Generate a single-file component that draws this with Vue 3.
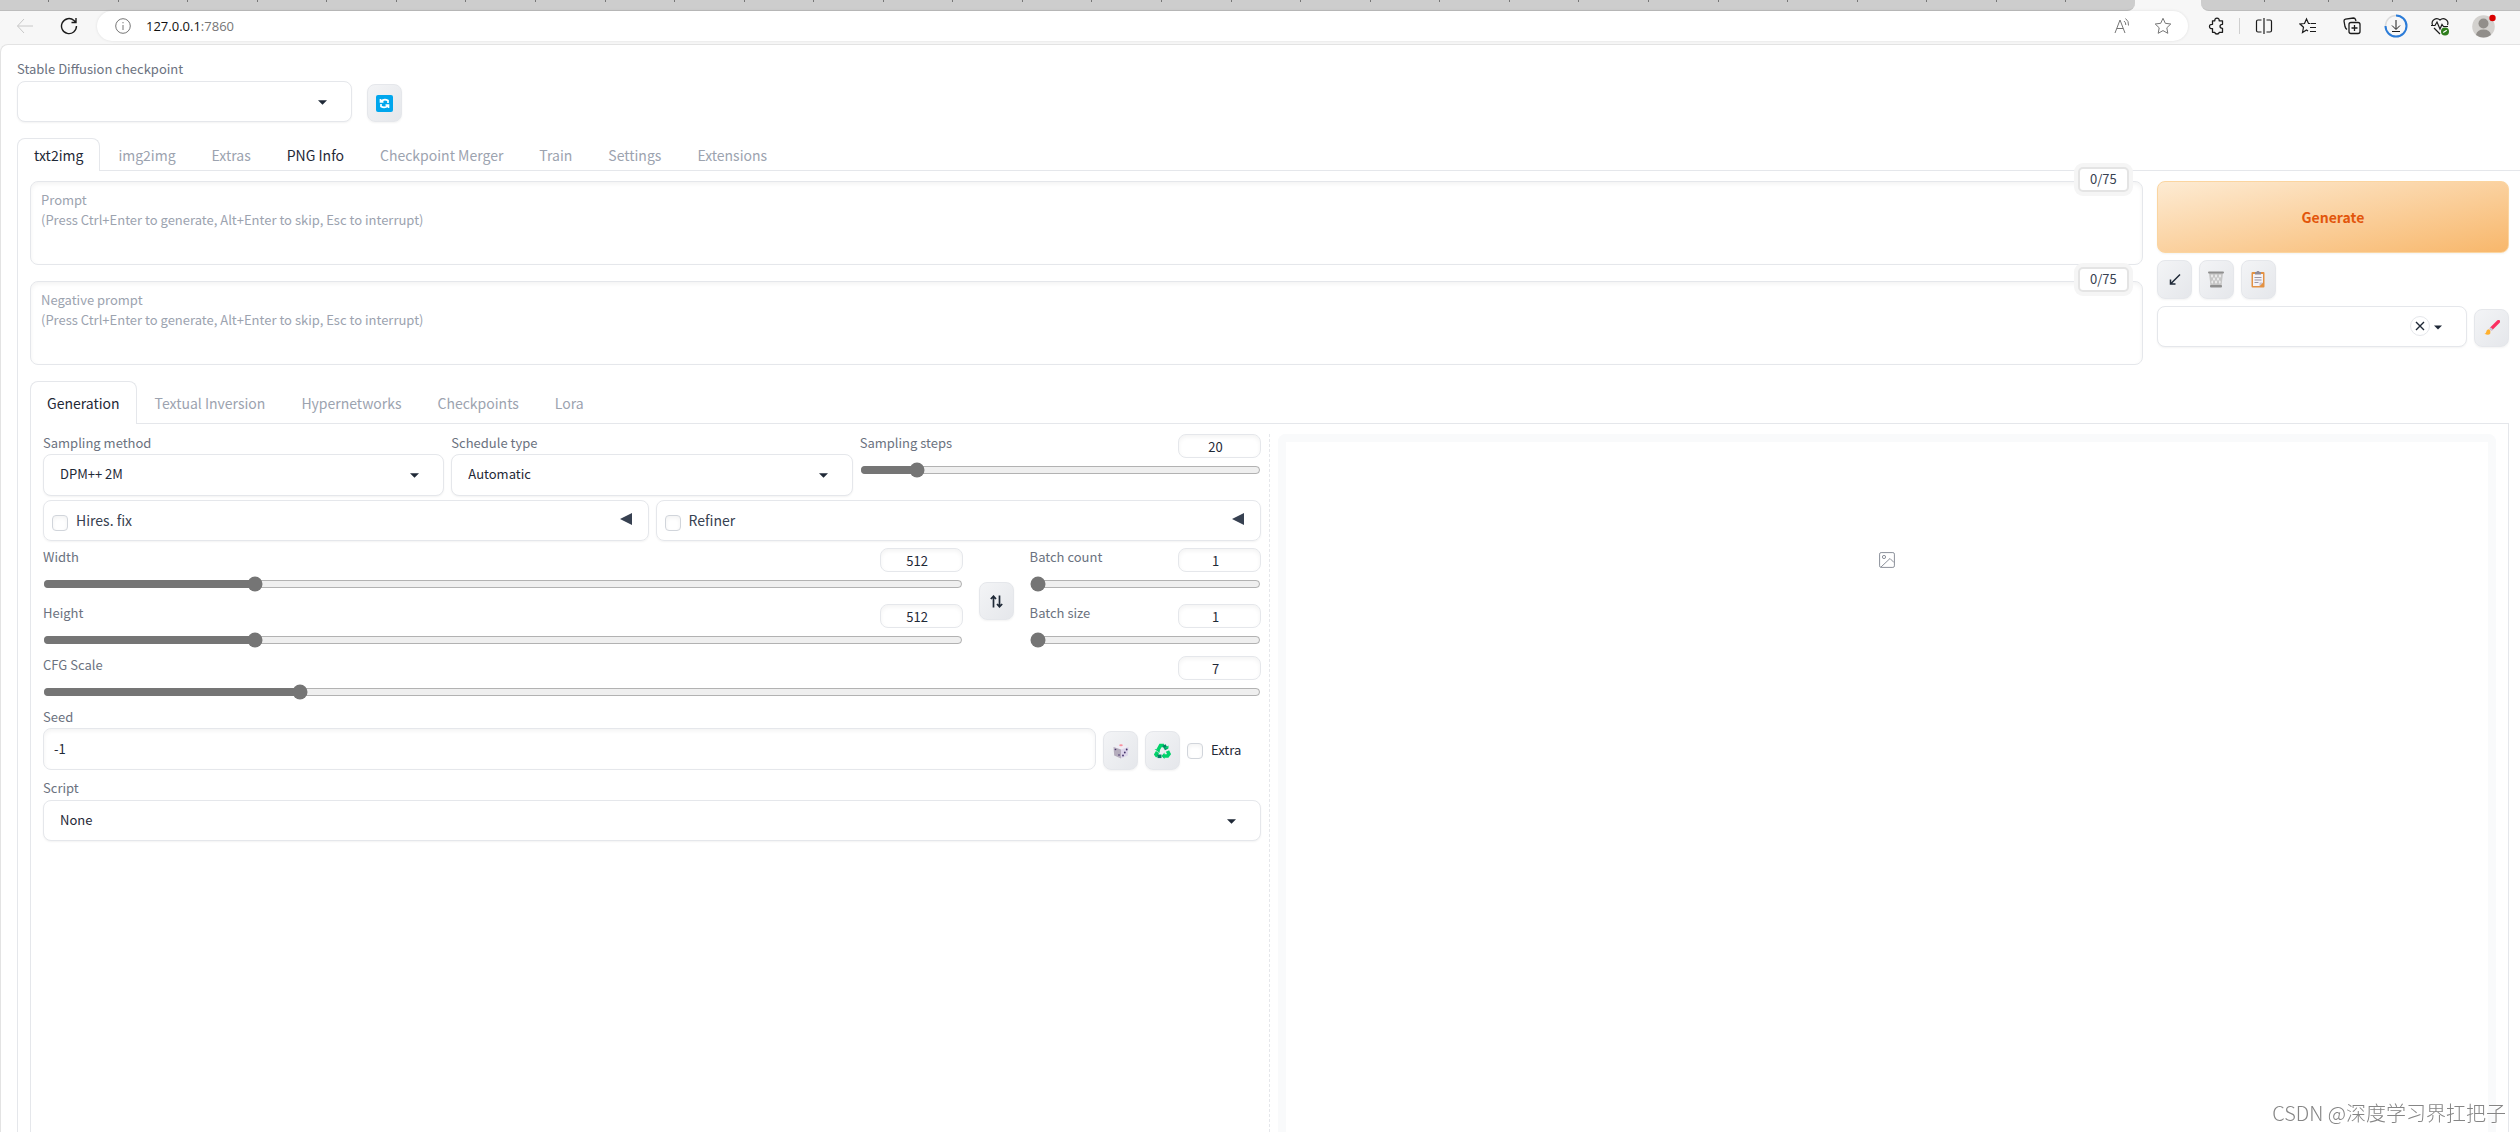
<script setup>
import { ref } from 'vue'

const tabs = ['txt2img', 'img2img', 'Extras', 'PNG Info', 'Checkpoint Merger', 'Train', 'Settings', 'Extensions']
const activeTab = ref('txt2img')
const subTabs = ['Generation', 'Textual Inversion', 'Hypernetworks', 'Checkpoints', 'Lora']
const activeSub = ref('Generation')

const hint = '(Press Ctrl+Enter to generate, Alt+Enter to skip, Esc to interrupt)'
const prompts = ref([
  { id: 'prompt', name: 'Prompt', text: '' },
  { id: 'negative', name: 'Negative prompt', text: '' },
])

const steps = ref(20)
const width = ref(512)
const height = ref(512)
const batchCount = ref(1)
const batchSize = ref(1)
const cfg = ref(7)
const seed = ref('-1')
const sampler = ref('DPM++ 2M')
const schedule = ref('Automatic')
const script = ref('None')

function swapSize() {
  const w = width.value
  width.value = height.value
  height.value = w
}
</script>

<template>
  <div class="browser">
    <div class="strip">
      <div class="strip-group wide"><i class="first"></i><i v-for="n in 30" :key="n"></i></div>
      <div class="strip-active"></div>
      <div class="strip-group rest"><i v-for="n in 5" :key="n"></i></div>
    </div>

    <header class="toolbar">
      <button class="tb back" aria-label="Back">
        <svg width="18" height="18" viewBox="0 0 18 18"><path d="M17 9H1.500M8 2L1.500 9L8 16" /></svg>
      </button>
      <button class="tb" aria-label="Reload">
        <svg width="18" height="18" viewBox="0 0 18 18"><path d="M16.500 9A7.500 7.500 0 1 1 14 3.500L16 5.500M16 1V5.500H11.500" stroke-width="1.400" /></svg>
      </button>
      <div class="address">
        <svg class="info" width="16" height="16" viewBox="0 0 16 16"><circle cx="8" cy="8" r="7.300" /><path d="M8 7V12M8 4V5.300" /></svg>
        <span class="url">127.0.0.1<em>:7860</em></span>
        <button class="pill-btn" aria-label="Read aloud">
          <svg width="18" height="18" viewBox="0 0 18 18"><path d="M1 16L6 3L11 16M2.800 11.500H9.200M10 4Q12 5.500 11.800 8M11.500 1.500Q15 4 14.500 8.500" /></svg>
        </button>
        <button class="pill-btn" aria-label="Add to favorites">
          <svg width="18" height="18" viewBox="0 0 18 18"><path d="M9 1.300L11.300 6.300L16.800 7L12.800 10.800L13.800 16.300L9 13.600L4.200 16.300L5.200 10.800L1.200 7L6.700 6.300Z" stroke-linejoin="round" /></svg>
        </button>
      </div>
      <button class="tb ext" aria-label="Extensions">
        <svg width="18" height="18" viewBox="0 0 18 18"><path d="M4.500 3.800H6.800Q6.600 1.200 9 1.200T11.200 3.800H14.500V7.300Q12 7.300 12 9.300T14.500 11.300V15.300H11.200Q11 17 9 17T6.800 15.300H4.500V11.600Q1.500 11.800 1.500 9.500T4.500 7.300Z" stroke-width="1.300" stroke-linejoin="round" /></svg>
      </button>
      <span class="divider"></span>
      <button class="tb" aria-label="Split screen">
        <svg width="18" height="18" viewBox="0 0 18 18"><path d="M6.500 3H3Q1.500 3 1.500 4.500V13.500Q1.500 15 3 15H6.500M9 1V17M11.500 3H15Q16.500 3 16.500 4.500V13.500Q16.500 15 15 15H11.500" stroke-width="1.200" /></svg>
      </button>
      <button class="tb" aria-label="Favorites">
        <svg width="18" height="18" viewBox="0 0 18 18"><path d="M11.500 6.500H9.500L7.500 2L5.500 6.500L1 7L4.500 10.300L3.500 15.500L7.500 13L9 14M12 6.500H17M11 10.500H17M11 14.500H17" stroke-width="1.200" /></svg>
      </button>
      <button class="tb" aria-label="Collections">
        <svg width="18" height="18" viewBox="0 0 18 18"><path d="M4 12.500Q2.500 11.500 2 9.500L1 4Q1 2.500 2.500 2.200L10.500 1Q12 1 12.500 2.500L13 4M8 5.500H15Q17 5.500 17 7.500V14.500Q17 16.500 15 16.500H8Q6 16.500 6 14.500V7.500Q6 5.500 8 5.500ZM11.500 8V14M8.500 11H14.500" stroke-width="1.300" /></svg>
      </button>
      <button class="tb" aria-label="Downloads">
        <svg width="24" height="24" viewBox="0 0 24 24"><circle cx="12" cy="12" r="10.500" stroke="#dcdcdc" stroke-width="1.500" /><path d="M12 1.500A10.500 10.500 0 1 1 1.500 12" stroke="#2b7cd9" stroke-width="2" /><path d="M12 6V15M8 11.500L12 15.500L16 11.500M8 17.500H16" /></svg>
      </button>
      <button class="tb" aria-label="Browser essentials">
        <svg width="20" height="20" viewBox="0 0 20 20"><path d="M2.500 9A4.600 4.600 0 0 1 10 4A4.600 4.600 0 0 1 17.500 9M1 9.500H5L7 6L10 13L12 8.500L13.500 10.500H18M4 12L10 18" stroke-width="1.200" /><circle cx="15" cy="15.500" r="4" fill="#2e7d1c" stroke="none" /><path d="M13.200 16.500L16.800 14.300" stroke="#fff" stroke-width="1.200" /></svg>
      </button>
      <button class="tb" aria-label="Profile">
        <svg width="24" height="24" viewBox="0 0 24 24"><g stroke="none"><circle cx="11.500" cy="12.500" r="11.300" fill="#d3d1ce" /><circle cx="11.500" cy="9.500" r="5" fill="#918e8a" /><path d="M4 21Q5 15.500 11.500 15.500T19 21Q11.500 26 4 21Z" fill="#918e8a" /><circle cx="20.500" cy="4" r="3.200" fill="#d90000" /></g></svg>
      </button>
    </header>

    <main class="page">
      <div class="checkpoint">
        <div class="field">
          <label for="ckpt">Stable Diffusion checkpoint</label>
          <div class="select"><select id="ckpt"><option></option></select><svg class="caret" width="9" height="5" viewBox="0 0 10 5"><path d="M0 0H10L5 5Z" /></svg></div>
        </div>
        <button class="tool short" aria-label="Refresh">
          <svg width="17" height="17" viewBox="0 0 17 17"><rect width="17" height="17" rx="2" fill="#00a6ed" /><path d="M4.500 4V7H7.500M5 6.500Q8 3.300 12 5.500V8M12.500 13V10H9.500M12 10.500Q9 13.700 5 11.500V9" fill="none" stroke="#fff" stroke-width="1.700" /></svg>
        </button>
      </div>

      <nav class="tabs">
        <button v-for="t in tabs" :key="t" :class="{ active: t === activeTab, dark: t === 'PNG Info' }" @click="activeTab = t">{{ t }}</button>
      </nav>

      <section class="panel">
        <div class="top">
          <div class="prompts">
            <div v-for="p in prompts" :key="p.id" class="prompt">
              <textarea v-model="p.text" :aria-label="p.name" :placeholder="p.name + '\n' + hint"></textarea>
              <span class="counter">0/75</span>
            </div>
          </div>
          <div class="actions">
            <button class="generate">Generate</button>
            <div class="tools">
              <button class="tool" aria-label="Read parameters">
                <svg width="13" height="13" viewBox="0 0 13 13"><path d="M12 1.500L3 10.500M2.500 6.500V11H7.500" fill="none" stroke="#1f2937" stroke-width="1.500" /></svg>
              </button>
              <button class="tool" aria-label="Clear prompt">
                <svg width="16" height="17" viewBox="0 0 16 17"><path d="M1 2H15L13.500 15H2.500Z" fill="#c6c6c6" /><g fill="#ededed"><path d="M4 3L5.200 5L4 7L2.800 5ZM8 3L9.200 5L8 7L6.800 5ZM12 3L13.200 5L12 7L10.800 5ZM6 6L7.200 8L6 10L4.800 8ZM10 6L11.200 8L10 10L8.800 8ZM4.200 9L5.200 11L4.200 13L3.200 11ZM8 9L9.200 11L8 13L6.800 11ZM11.800 9L12.800 11L11.800 13L10.800 11Z" /></g><rect y=".5" width="16" height="2" rx="1" fill="#8f8f8f" /><rect x="2" y="14" width="12" height="2.500" rx="1" fill="#8f8f8f" /></svg>
              </button>
              <button class="tool" aria-label="Apply styles">
                <svg width="14" height="17" viewBox="0 0 14 17"><rect x=".5" y="1" width="13" height="15.500" rx="1" fill="#e39142" /><path d="M2 3H12V11.500L8.500 15H2Z" fill="#f4f2f7" /><path d="M12 11.500L8.500 15V11.500Z" fill="#c7c2cf" /><rect x="4" y="1" width="6" height="2.500" fill="#8f8b98" /><rect x="5.500" width="3" height="2" rx="1" fill="#8f8b98" /><path d="M3.500 6.500H10.500M3.500 9H10.500M3.500 11.500H7.500" stroke="#9a96a3" /></svg>
              </button>
            </div>
            <div class="styles">
              <div class="select">
                <select aria-label="Styles"><option></option></select>
                <button class="clear" aria-label="Clear styles"><svg width="10" height="10" viewBox="0 0 10 10"><path d="M1 1L9 9M9 1L1 9" fill="none" stroke="#1f2937" stroke-width="1.400" /></svg></button>
                <svg class="caret" width="8" height="5" viewBox="0 0 10 5"><path d="M0 0H10L5 5Z" /></svg>
              </div>
              <button class="tool short" aria-label="Edit styles">
                <svg width="16" height="16" viewBox="0 0 16 16"><path d="M14.500 1.500L7.500 8.500" stroke="#fb2f62" stroke-width="3.200" stroke-linecap="round" /><path d="M6 8L8.300 10.300" stroke="#cfc9d8" stroke-width="2" /><path d="M5.200 9.300Q2.500 9 2.200 12Q2 13.500 0.500 13.700Q4.500 15.800 6.300 13.500Q7.500 11.500 5.200 9.300Z" fill="#ffb02e" /></svg>
              </button>
            </div>
          </div>
        </div>

        <nav class="tabs sub">
          <button v-for="t in subTabs" :key="t" :class="{ active: t === activeSub }" @click="activeSub = t">{{ t }}</button>
        </nav>

        <section class="panel inner">
          <div class="settings">
            <div class="row three">
              <div class="field">
                <label for="sampler">Sampling method</label>
                <div class="select"><select id="sampler" v-model="sampler"><option>DPM++ 2M</option></select><svg class="caret" width="9" height="5" viewBox="0 0 10 5"><path d="M0 0H10L5 5Z" /></svg></div>
              </div>
              <div class="field">
                <label for="schedule">Schedule type</label>
                <div class="select"><select id="schedule" v-model="schedule"><option>Automatic</option></select><svg class="caret" width="9" height="5" viewBox="0 0 10 5"><path d="M0 0H10L5 5Z" /></svg></div>
              </div>
              <div class="slider">
                <div class="head"><label for="steps">Sampling steps</label><input v-model="steps" type="number" aria-label="Sampling steps value"></div>
                <input id="steps" v-model="steps" type="range" min="1" max="150">
              </div>
            </div>

            <div class="row accordions">
              <div class="accordion">
                <input id="hires" type="checkbox"><label for="hires">Hires. fix</label>
                <svg width="12" height="12" viewBox="0 0 12 12"><path d="M12 0V12L0 6Z" /></svg>
              </div>
              <div class="accordion">
                <input id="refiner" type="checkbox"><label for="refiner">Refiner</label>
                <svg width="12" height="12" viewBox="0 0 12 12"><path d="M12 0V12L0 6Z" /></svg>
              </div>
            </div>

            <div class="row size">
              <div class="stack">
                <div class="slider">
                  <div class="head"><label for="width">Width</label><input v-model="width" type="number" aria-label="Width value"></div>
                  <input id="width" v-model="width" type="range" min="64" max="2048" step="8">
                </div>
                <div class="slider">
                  <div class="head"><label for="height">Height</label><input v-model="height" type="number" aria-label="Height value"></div>
                  <input id="height" v-model="height" type="range" min="64" max="2048" step="8">
                </div>
              </div>
              <div class="swap">
                <button class="tool short" aria-label="Swap width and height" @click="swapSize">
                  <svg width="13" height="13" viewBox="0 0 13 13"><path d="M3.500 12.500V1.500M0.800 4L3.500 1.200L6 4M9.500 0.500V11.500M7 9L9.500 11.800L12.200 9" fill="none" stroke="#1f2937" stroke-width="1.700" /></svg>
                </button>
              </div>
              <div class="stack batch">
                <div class="slider">
                  <div class="head"><label for="count">Batch count</label><input v-model="batchCount" type="number" aria-label="Batch count value"></div>
                  <input id="count" v-model="batchCount" type="range" min="1" max="100">
                </div>
                <div class="slider">
                  <div class="head"><label for="bsize">Batch size</label><input v-model="batchSize" type="number" aria-label="Batch size value"></div>
                  <input id="bsize" v-model="batchSize" type="range" min="1" max="8">
                </div>
              </div>
            </div>

            <div class="slider cfg">
              <div class="head"><label for="cfg">CFG Scale</label><input v-model="cfg" type="number" aria-label="CFG Scale value"></div>
              <input id="cfg" v-model="cfg" type="range" min="1" max="30" step="0.5">
            </div>

            <div class="row seed">
              <div class="field">
                <label for="seed">Seed</label>
                <input id="seed" v-model="seed" class="text" type="text">
              </div>
              <button class="tool" aria-label="Random seed">
                <svg width="16" height="16" viewBox="0 0 16 16"><path d="M0.500 4L8 1.500L15.500 4L8 6.500Z" fill="#f1edf5" /><path d="M0.500 4L8 6.500V15.500L1.200 12.500Z" fill="#b4acbc" /><path d="M15.500 4L8 6.500V15.500L14.800 12.500Z" fill="#ddd6ea" /><ellipse cx="8" cy="2.200" rx="1.800" ry="1" fill="#f8929f" /><g fill="#43316b"><circle cx="2.500" cy="6.500" r=".8" /><circle cx="6" cy="12" r=".8" /><circle cx="10" cy="12.500" r=".9" /><circle cx="11.800" cy="9.500" r=".9" /><circle cx="13.700" cy="6.500" r=".9" /></g></svg>
              </button>
              <button class="tool" aria-label="Reuse seed">
                <svg width="17" height="16" viewBox="0 0 17 16"><g fill="none" stroke-width="3.600"><path d="M4 7L6.500 2.500H10" stroke="#00d26a" /><path d="M10 2L12.500 6.500" stroke="#008463" /><path d="M13.500 8L15 11L13.500 13H9.500" stroke="#00d26a" /><path d="M3.500 9L2 11.500L3.500 13.500" stroke="#00d26a" /><path d="M3.500 13.300H7.500" stroke="#008463" /></g><path d="M9.500 5.500H14.500V2.500ZM10.500 9.500V16L7.500 13ZM0.500 6L6 6.500L5.500 10Z" fill="#00d26a" /></svg>
              </button>
              <div class="extra"><input id="extra" type="checkbox"><label for="extra">Extra</label></div>
            </div>

            <div class="field script">
              <label for="script">Script</label>
              <div class="select"><select id="script" v-model="script"><option>None</option></select><svg class="caret" width="9" height="5" viewBox="0 0 10 5"><path d="M0 0H10L5 5Z" /></svg></div>
            </div>
          </div>

          <div class="handle"></div>

          <div class="gallery">
            <svg width="16" height="16" viewBox="0 0 16 16"><rect x=".6" y=".6" width="14.800" height="14.800" rx="1.500" /><circle cx="5" cy="5" r="1.600" /><path d="M2 15L11 6.500L15 10.500" /></svg>
          </div>
        </section>
      </section>
    </main>

    <div class="watermark">CSDN @深度学习界扛把子</div>
  </div>
</template>

<style>
body {
  background: #fff;
  overflow: hidden;
}
</style>

<style scoped>
.browser,
.browser * {
  box-sizing: border-box;
}
.browser {
  display: flex;
  flex-direction: column;
  min-height: 100vh;
  background: #f7f7f7;
  color: #1f2937;
  font-family: "Noto Sans CJK SC", "Noto Sans", sans-serif;
  font-size: 13px;
  line-height: 20px;
}
button,
input,
select,
textarea {
  margin: 0;
  font: inherit;
  color: inherit;
}
button {
  padding: 0;
  border: 0;
  background: none;
}

/* browser chrome */
.strip {
  display: flex;
  height: 11px;
}
.strip-group {
  display: flex;
  background: #cdcdcd;
  border-bottom: 1px solid #bdbdbd;
}
.strip-group i {
  flex: 1;
  height: 2px;
  border-right: 1px solid #777;
}
.strip-group i.first {
  flex: 0 0 49px;
}
.strip-group i:last-child {
  border: 0;
}
.wide {
  flex: 1;
  border-radius: 0 0 8px 0;
}
.strip-active {
  width: 66px;
}
.rest {
  width: 319px;
  border-radius: 0 0 0 8px;
}
.toolbar {
  display: flex;
  align-items: center;
  height: 33px;
  padding: 0 14px 3px 3px;
}
.toolbar svg {
  fill: none;
  stroke: #1b1b1b;
}
.tb {
  display: flex;
  flex: 0 0 44px;
  align-items: center;
  justify-content: center;
}
.tb.back svg {
  stroke: #c8c8c8;
}
.tb.ext {
  margin-left: 7px;
}
.divider {
  width: 1px;
  height: 16px;
  margin-right: 2px;
  background: #cfcfcf;
}
.address {
  display: flex;
  flex: 1;
  align-items: center;
  height: 30px;
  margin-left: 6px;
  padding: 0 16px 0 18px;
  border-radius: 15px;
  background: #fff;
  box-shadow: 0 0 3px rgba(0, 0, 0, 0.1);
}
.toolbar .address svg {
  display: block;
  stroke: #767676;
}
.url {
  flex: 1;
  margin-left: 15px;
  color: #111;
  font-family: "Open Sans", sans-serif;
  font-size: 13px;
}
.url em {
  color: #767676;
  font-style: normal;
}
.pill-btn {
  margin-left: 22px;
}

/* page */
.page {
  display: flex;
  flex: 1;
  flex-direction: column;
  padding: 15px 0 0 16px;
  border: 1px solid #e3e3e3;
  border-width: 1px 0 0 1px;
  border-radius: 8px 0 0 0;
  background: #fff;
}
.field {
  display: flex;
  flex: 1;
  flex-direction: column;
  min-width: 0;
}
label {
  color: #6b7280;
}
.field > label {
  padding-bottom: 2px;
  line-height: 18px;
}
.select {
  position: relative;
  flex: 1;
}
.select select {
  display: block;
  width: 100%;
  height: 41px;
  padding: 0 40px 2px 16px;
  border: 1px solid #e5e7eb;
  border-radius: 8px;
  background: #fff;
  box-shadow: 0 1px 2px rgba(0, 0, 0, 0.05);
  appearance: none;
}
.caret {
  position: absolute;
  top: 19px;
  right: 25px;
  fill: #1f2937;
  pointer-events: none;
}
.tool {
  display: flex;
  flex: 0 0 35px;
  align-items: center;
  justify-content: center;
  height: 39px;
  border: 1px solid #e5e7eb;
  border-radius: 8px;
  background: linear-gradient(to bottom right, #f3f4f6, #e5e7eb);
  box-shadow: 0 1px 2px rgba(0, 0, 0, 0.05);
}
.tool.short {
  height: 38px;
}
.checkpoint {
  display: flex;
  align-items: flex-end;
  gap: 15px;
}
.checkpoint .field {
  flex: 0 0 335px;
}
.checkpoint .field > label,
.script > label {
  padding-bottom: 3px;
}

.tabs {
  display: flex;
  height: 32px;
  margin-top: 16px;
}
.tabs button {
  height: 33px;
  padding: 0 17px;
  border: 1px solid transparent;
  border-bottom: 0;
  border-radius: 8px 8px 0 0;
  color: #9ca3af;
  font-size: 14px;
}
.tabs button.dark {
  color: #1f2937;
}
.tabs button.active {
  z-index: 1;
  padding: 0 16px;
  border-color: #e5e7eb;
  background: #fff;
  color: #1f2937;
}
.tabs.sub {
  height: 42px;
}
.tabs.sub button {
  height: 43px;
}
.panel {
  display: flex;
  flex: 1;
  flex-direction: column;
  padding: 10px 11px 0 12px;
  border: 1px solid #e5e7eb;
  border-width: 1px 0 0 1px;
}
.panel.inner {
  display: grid;
  grid-template-columns: minmax(0, 1fr) 1px minmax(0, 1fr);
  gap: 8px;
  padding: 10px 12px 0;
  border-width: 1px 1px 0;
}

.top {
  display: flex;
  gap: 14px;
}
.prompts {
  display: flex;
  flex: 6;
  flex-direction: column;
  gap: 16px;
}
.prompt {
  position: relative;
}
textarea,
.text,
.head input {
  border: 1px solid #e5e7eb;
  border-radius: 8px;
  background: #fff;
  box-shadow: inset 0 2px 4px rgba(0, 0, 0, 0.05);
}
textarea {
  display: block;
  width: 100%;
  height: 84px;
  padding: 8px 10px;
  resize: none;
}
textarea::placeholder {
  color: #9ca3af;
  opacity: 1;
}
.counter {
  position: absolute;
  top: -14px;
  right: 14px;
  width: 51px;
  padding-bottom: 1px;
  border: 2px solid #e4e4e4;
  border-radius: 5px;
  background: #fff;
  box-shadow: 0 0 0 4px #f5f5f5;
  color: #374151;
  line-height: 20px;
  text-align: center;
}
.actions {
  display: flex;
  flex: 1;
  flex-direction: column;
  gap: 7px;
}
.generate {
  height: 72px;
  border: 1px solid #fbd5a0;
  border-radius: 8px;
  background: linear-gradient(to bottom right, #fdebd3, #f8b76b);
  box-shadow: 0 1px 2px rgba(0, 0, 0, 0.05);
  color: #e2560c;
  font-size: 14px;
  font-weight: 700;
}
.tools,
.styles {
  display: flex;
  align-items: flex-end;
  gap: 7px;
}
.clear {
  position: absolute;
  top: 10px;
  right: 37px;
  display: flex;
  align-items: center;
  justify-content: center;
  width: 20px;
  height: 20px;
  border: 1px solid #e5e7eb;
  border-radius: 50%;
  background: #fff;
}

.settings {
  display: flex;
  flex-direction: column;
}
.row {
  display: flex;
  gap: 7px;
}
.three .slider,
.three .field {
  flex: 1 1 0;
}
.three .select select {
  height: 42px;
}
.head {
  display: flex;
  align-items: flex-start;
  justify-content: space-between;
  height: 24px;
}
.head label {
  line-height: 18px;
}
.head input {
  width: 83px;
  height: 24px;
  padding: 0 8px 0 0;
  text-align: center;
  appearance: textfield;
}
.head input::-webkit-inner-spin-button {
  display: none;
}
input[type="range"] {
  display: block;
  width: 100%;
  height: 16px;
  margin: 4px 0 0;
  accent-color: #757575;
}
.accordions {
  margin-top: 4px;
}
.accordion {
  display: flex;
  flex: 1;
  align-items: center;
  height: 41px;
  padding: 0 16px 0 8px;
  border: 1px solid #e5e7eb;
  border-radius: 8px;
  box-shadow: 0 1px 2px rgba(0, 0, 0, 0.05);
}
.accordion label {
  flex: 1;
  margin-left: 8px;
  padding-bottom: 2px;
  color: #374151;
  font-size: 14px;
}
.accordion svg {
  margin-bottom: 3px;
  fill: #374151;
}
input[type="checkbox"] {
  width: 16px;
  height: 16px;
  border: 1px solid #d1d5db;
  border-radius: 4px;
  background: #fff;
  box-shadow: inset 0 2px 4px rgba(0, 0, 0, 0.05);
  appearance: none;
}
.accordion input[type="checkbox"] {
  margin-top: 4px;
}
.size {
  margin-top: 7px;
  gap: 16px;
}
.stack {
  display: flex;
  flex: 1;
  flex-direction: column;
  gap: 12px;
}
.stack.batch {
  flex: 0 0 19%;
}
.swap {
  display: flex;
  flex: 0 0 35px;
  align-items: center;
  padding-top: 6px;
}
.swap .tool {
  width: 35px;
}
.cfg {
  margin-top: 8px;
}
.seed {
  align-items: flex-end;
  margin-top: 8px;
}
.text {
  width: 100%;
  height: 42px;
  padding: 0 10px 2px;
}
.extra {
  display: flex;
  align-items: center;
  gap: 8px;
  width: 74px;
  height: 39px;
}
.extra label {
  padding-bottom: 1px;
  color: #1f2937;
}
.script {
  flex: none;
  margin-top: 9px;
}
.handle {
  background: repeating-linear-gradient(#e5e7eb 0 3px, transparent 3px 5px);
}
.gallery {
  padding-top: 110px;
  border: 8px solid #f9fafb;
  border-bottom: 0;
  border-radius: 8px 8px 0 0;
}
.gallery svg {
  display: block;
  margin: 0 auto;
  fill: none;
  stroke: #8b909a;
}
.watermark {
  position: fixed;
  right: 14px;
  bottom: 6px;
  color: #858585;
  font-size: 20px;
  font-weight: 300;
  line-height: 26px;
  text-shadow: 1px 1px 0 #fff;
}
</style>
